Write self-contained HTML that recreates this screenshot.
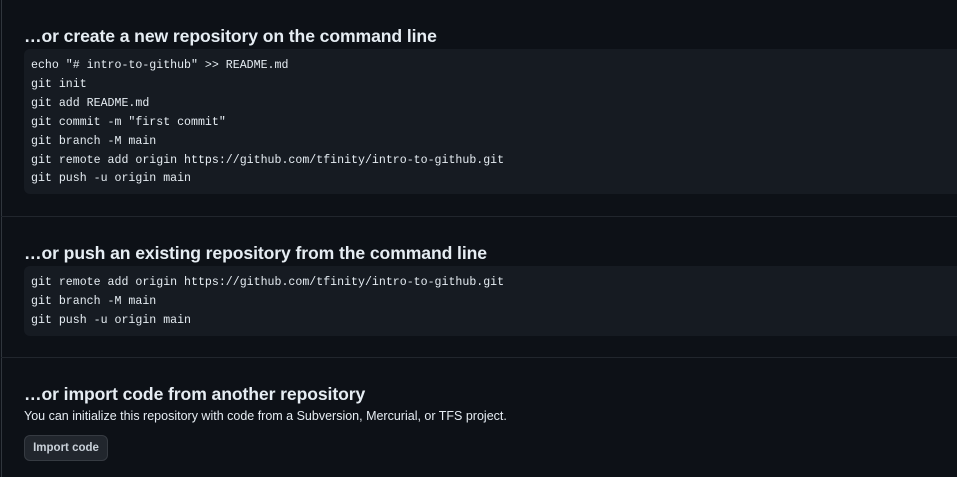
<!DOCTYPE html>
<html><head><style>
body{margin:0;background:#0d1117;width:957px;height:477px;overflow:hidden;position:relative;font-family:"Liberation Sans",sans-serif;color:#e6edf3}
.vl{position:absolute;left:1px;top:0;width:1px;height:477px;background:#30363d}
.hl{position:absolute;left:1px;right:0;height:1px;background:#21262d}
h3{position:absolute;left:24px;margin:0;font-size:17.6px;font-weight:600;color:#e6edf3;letter-spacing:-0.1px}
.code{position:absolute;left:24px;right:0;background:#161b22;border-radius:6px 0 0 6px;padding:8px 7px;font-family:"Liberation Mono",monospace;font-size:11.6px;line-height:18.9px;color:#e6edf3;white-space:pre;box-sizing:border-box}
p{position:absolute;left:24px;top:409px;margin:0;font-size:12.5px;color:#e6edf3}
.btn{position:absolute;left:24px;top:435px;width:82px;height:24px;border:1px solid #363b42;border-radius:6px;background:#21262d;font-size:11.5px;font-weight:600;color:#c9d1d9;text-align:center;line-height:24px}
</style></head><body>
<div class="vl"></div>
<h3 style="top:26px">…or create a new repository on the command line</h3>
<div class="code" style="top:49px;height:145px">echo "# intro-to-github" &gt;&gt; README.md
git init
git add README.md
git commit -m "first commit"
git branch -M main
git remote add origin https://github.com/tfinity/intro-to-github.git
git push -u origin main</div>
<div class="hl" style="top:216px"></div>
<h3 style="top:243px">…or push an existing repository from the command line</h3>
<div class="code" style="top:266px;height:70px">git remote add origin https://github.com/tfinity/intro-to-github.git
git branch -M main
git push -u origin main</div>
<div class="hl" style="top:357px"></div>
<h3 style="top:384px">…or import code from another repository</h3>
<p>You can initialize this repository with code from a Subversion, Mercurial, or TFS project.</p>
<div class="btn">Import code</div>
</body></html>
